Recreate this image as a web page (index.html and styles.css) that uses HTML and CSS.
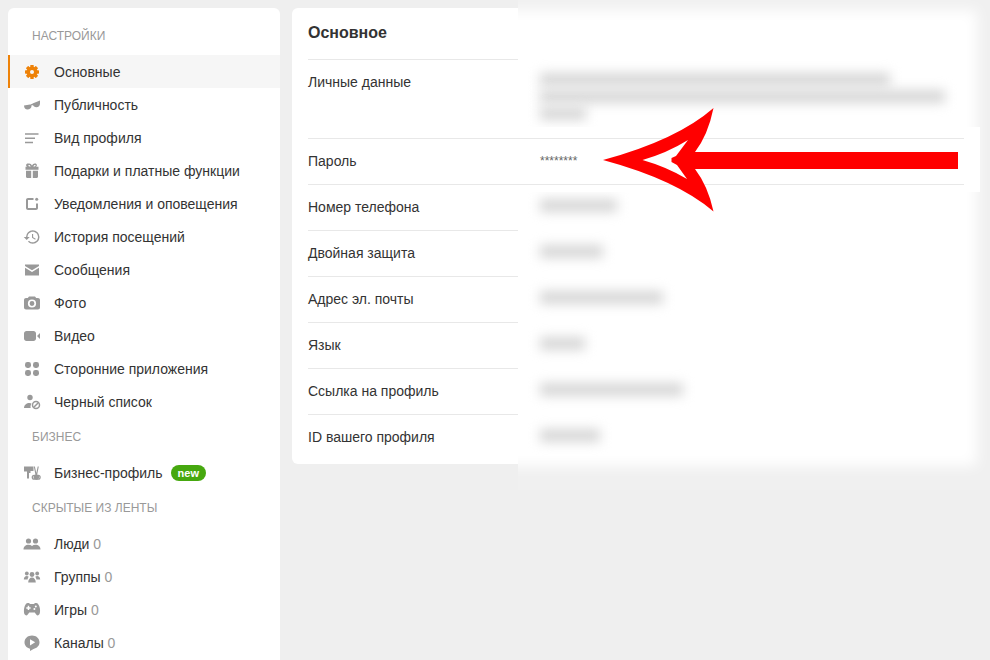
FILE: index.html
```html
<!DOCTYPE html>
<html lang="ru">
<head>
<meta charset="utf-8">
<title>Настройки</title>
<link rel="stylesheet" href="styles.css">
</head>
<body>
<div class="page">
  <nav class="side">
    <div class="side-head">Настройки</div>
    <a class="item active"><svg class="ico" viewBox="0 0 18 18"><g fill="#ee8208"><circle cx="9" cy="9" r="5.4"/><rect x="7.3" y="2" width="3.4" height="14" rx=".6"/><rect x="7.3" y="2" width="3.4" height="14" rx=".6" transform="rotate(45 9 9)"/><rect x="7.3" y="2" width="3.4" height="14" rx=".6" transform="rotate(90 9 9)"/><rect x="7.3" y="2" width="3.4" height="14" rx=".6" transform="rotate(135 9 9)"/></g><circle cx="9" cy="9" r="2" fill="#f6f6f6"/></svg><span>Основные</span></a>
    <a class="item"><svg class="ico" viewBox="0 0 18 18"><path d="M1 9.500 8.500 8.200V10c0 2-2 3.500-4 3.500S1 12 1 9.500zM9.500 7.600 17 4.500v3c0 2.300-1.500 3.700-3.500 3.700S9.500 10 9.500 7.600zM8 8.300l2-.8v1.400l-2 .5z"/></svg><span>Публичность</span></a>
    <a class="item"><svg class="ico" viewBox="0 0 18 18"><path d="M2 4.300h13.500v1.500H2zM2 8.500h10v1.500H2zM2 12.700h8v1.500H2z"/></svg><span>Вид профиля</span></a>
    <a class="item"><svg class="ico" viewBox="0 0 18 18"><path fill-rule="evenodd" d="M6.100 1.500c1.300 0 2.300.8 2.900 2 .6-1.200 1.600-2 2.900-2 1.200 0 2 .7 2 1.700 0 .8-.4 1.300-1 1.600H15.500v2.900h-13V4.800h1.600c-.6-.3-1-.8-1-1.600 0-1 .8-1.700 2-1.700zm0 1.400c-.5 0-.8.200-.8.500 0 .6.900 1 2.400 1.200-.3-1-.9-1.700-1.600-1.700zm5.800 0c-.7 0-1.300.7-1.600 1.700 1.500-.2 2.400-.6 2.400-1.200 0-.3-.3-.5-.8-.5zM3 8.700h5.200v7.200H4.200c-.7 0-1.200-.5-1.200-1.200zm6.800 0H15v6c0 .7-.5 1.200-1.200 1.200h-4z"/></svg><span>Подарки и платные функции</span></a>
    <a class="item"><svg class="ico" viewBox="0 0 18 18"><path d="M10.500 3H5C3.900 3 3 3.900 3 5v8c0 1.100.9 2 2 2h8c1.100 0 2-.9 2-2V8.500h-2V13H5V5h5.500z"/><circle cx="13.700" cy="4.300" r="1.500"/></svg><span>Уведомления и оповещения</span></a>
    <a class="item"><svg class="ico" viewBox="0 0 24 24"><path d="M13 3a9 9 0 0 0-9 9H1l3.890 3.890.07.14L9 12H6c0-3.870 3.130-7 7-7s7 3.130 7 7-3.130 7-7 7c-1.930 0-3.680-.79-4.940-2.060l-1.420 1.420A8.954 8.954 0 0 0 13 21a9 9 0 0 0 0-18zm-1 5v5l4.280 2.540.72-1.210-3.500-2.080V8H12z"/></svg><span>История посещений</span></a>
    <a class="item"><svg class="ico" viewBox="0 0 18 18"><path d="M2 3.500h14v1.400L9 9.200 2 4.900zM2 6.700l7 4.300 7-4.300v7.800H2z"/></svg><span>Сообщения</span></a>
    <a class="item"><svg class="ico" viewBox="0 0 18 18"><path fill-rule="evenodd" d="M6 2.500h6l1.200 1.500H15c1.100 0 2 .9 2 2v7.500c0 1.100-.9 2-2 2H3c-1.100 0-2-.9-2-2V6c0-1.100.9-2 2-2h1.800zM9 5.400a4.100 4.100 0 1 0 0 8.200 4.100 4.100 0 0 0 0-8.200zm0 1.700a2.400 2.400 0 1 1 0 4.800 2.400 2.400 0 0 1 0-4.800z"/></svg><span>Фото</span></a>
    <a class="item"><svg class="ico" viewBox="0 0 18 18"><path d="M3.500 4H10.500C11.900 4 13 5.100 13 6.500v5c0 1.400-1.100 2.500-2.500 2.500h-7C2.100 14 1 12.900 1 11.500v-5C1 5.100 2.100 4 3.500 4zM14 9l3-3v6z"/></svg><span>Видео</span></a>
    <a class="item"><svg class="ico" viewBox="0 0 18 18"><rect x="2" y="2" width="6" height="6" rx="2.400"/><rect x="10" y="2" width="6" height="6" rx="2.400"/><rect x="2" y="10" width="6" height="6" rx="2.400"/><rect x="10" y="10" width="6" height="6" rx="2.400"/></svg><span>Сторонние приложения</span></a>
    <a class="item"><svg class="ico" viewBox="0 0 18 18"><circle cx="7" cy="4.500" r="2.700"/><path d="M1 15c0-3 2.600-5 5.500-5 .8 0 1.500.2 2 .5-.6.900-1 1.900-1 3 0 .5.100 1 .2 1.500z"/><circle cx="13" cy="12" r="3.500" fill="none" stroke="#999" stroke-width="1.500"/><path d="M10.800 14.300l4.500-4.500" stroke="#999" stroke-width="1.500"/></svg><span>Черный список</span></a>
    <div class="side-head">Бизнес</div>
    <a class="item"><svg class="ico" viewBox="0 0 18 18"><path d="M1 2.500h9.500v4.500H7.500v2H6v5.500H4V7.500H1z"/><path d="M10.800 2.500h1.100l1.400 6.500 1.400-6.500h1.100L14.200 10.500a2.800 2.800 0 1 1-1.800 0z"/><circle cx="11.200" cy="13.200" r="1.900" fill="none" stroke="#999" stroke-width="1.300"/><circle cx="15.200" cy="13.200" r="1.900" fill="none" stroke="#999" stroke-width="1.300"/></svg><span>Бизнес-профиль</span><b class="badge">new</b></a>
    <div class="side-head">Скрытые из ленты</div>
    <a class="item"><svg class="ico" viewBox="0 0 18 18"><circle cx="5.500" cy="6" r="2.600"/><circle cx="12.500" cy="6" r="2.600"/><path d="M.5 14.500c0-3 2.200-4.800 5-4.800 1.400 0 2.600.4 3.500 1.200.9-.8 2.100-1.200 3.500-1.200 2.800 0 5 1.800 5 4.800z"/></svg><span>Люди <i class="count">0</i></span></a>
    <a class="item"><svg class="ico" viewBox="0 0 18 18"><circle cx="3.800" cy="5.500" r="1.900"/><circle cx="9" cy="6.500" r="2.400"/><circle cx="14.200" cy="5.500" r="1.900"/><path d="M.8 11.500c0-2 1.300-3.400 3-3.400.8 0 1.400.3 1.900.7-.6.700-1 1.600-1.100 2.700zM17.200 11.500c0-2-1.300-3.400-3-3.400-.8 0-1.400.3-1.900.7.600.7 1 1.600 1.100 2.700zM5.200 14.500c0-3 1.700-5 3.800-5s3.800 2 3.800 5z"/></svg><span>Группы <i class="count">0</i></span></a>
    <a class="item"><svg class="ico" viewBox="0 0 18 18"><path fill-rule="evenodd" d="M5 2c1 0 1.700.5 2.200 1h3.600c.5-.5 1.200-1 2.200-1 2 0 3.200 2 3.800 5 .5 2.800.4 6.500-1.500 7.300-1.300.5-2.500-1-3.500-2.800H6.200c-1 1.800-2.200 3.300-3.500 2.800C.8 13.500.7 9.800 1.200 7 1.800 4 3 2 5 2zM4.700 4.800v1.400H3.300v1.500h1.400v1.400h1.500V7.700h1.400V6.200H6.200V4.800zM12.800 4.500a1 1 0 1 0 0 2 1 1 0 0 0 0-2zm-1.400 2.400a1 1 0 1 0 0 2 1 1 0 0 0 0-2z"/></svg><span>Игры <i class="count">0</i></span></a>
    <a class="item"><svg class="ico" viewBox="0 0 18 18"><path fill-rule="evenodd" d="M9 1.500c4.200 0 7.500 2.900 7.500 6.800 0 3.400-2.600 6-6 6.600L7 17v-2.300C3.800 14 1.500 11.500 1.500 8.300 1.500 4.400 4.800 1.500 9 1.500zM7 5.200v6.200l5.200-3.100z"/></svg><span>Каналы <i class="count">0</i></span></a>
  </nav>

  <main class="card">
    <h2 class="card-title">Основное</h2>
    <div class="row tall">Личные данные</div>
    <div class="row">Пароль</div>
    <div class="row">Номер телефона</div>
    <div class="row">Двойная защита</div>
    <div class="row">Адрес эл. почты</div>
    <div class="row">Язык</div>
    <div class="row">Ссылка на профиль</div>
    <div class="row">ID вашего профиля</div>
  </main>

  <div class="mask">
    <div class="mask-sheet"></div>
    <div class="mask-col">
      <div class="val tall">
        <div class="smear smear-a"></div>
        <div class="smear smear-b"></div>
        <div class="smear smear-c"></div>
      </div>
      <div class="val pass">
        <div class="pass-strip"><div class="pass-line">********</div></div>
      </div>
      <div class="val"><div class="smear w77"></div></div>
      <div class="val"><div class="smear w63"></div></div>
      <div class="val"><div class="smear w123"></div></div>
      <div class="val"><div class="smear w45"></div></div>
      <div class="val"><div class="smear w143"></div></div>
      <div class="val"><div class="smear w60"></div></div>
    </div>
  </div>

  <svg class="arrow" viewBox="0 0 990 660" width="990" height="660"><path fill="#ff0000" fill-rule="evenodd" d="M603 160 Q677 140 713.500 108 Q708 135 695 152 H958 V169 H695 Q708 186 713.500 211.500 Q677 180 603 160 Z M642.500 160 Q667 167 687 179 L677 165 L671.500 162 V158 L676 156 L688 140 Q667 153 642.500 160 Z"/></svg>
</div>
</body>
</html>
```

FILE: styles.css
```css
html, body {
  margin: 0;
  height: 660px;
  overflow: hidden;
  background: #efefef;
}

body {
  font-family: "Liberation Sans", Arial, sans-serif;
  font-size: 14px;
  color: #333;
}

.page {
  position: relative;
  display: flex;
  align-items: flex-start;
  gap: 12px;
  box-sizing: border-box;
  padding: 8px 8px 0;
  height: 660px;
}

.side {
  flex: none;
  width: 272px;
  height: 652px;
  padding-top: 9px;
  box-sizing: border-box;
  background: #fff;
  border-radius: 6px 6px 0 0;
}

.side-head {
  height: 38px;
  line-height: 38px;
  padding-left: 24px;
  font-size: 12px;
  color: #999;
  text-transform: uppercase;
}

.item {
  display: flex;
  align-items: center;
  height: 33px;
  padding-left: 13px;
  border-left: 2px solid transparent;
  color: #333;
}

.item.active {
  background: #f6f6f6;
  border-left-color: #ee8208;
}

.ico {
  flex: none;
  width: 18px;
  height: 18px;
  margin-right: 13px;
  fill: #999;
}

.badge {
  margin-left: 8px;
  padding: 0 7px;
  height: 16px;
  line-height: 16px;
  font-size: 11px;
  color: #fff;
  background: #46a80f;
  border-radius: 8px;
}

.count {
  font-style: normal;
  color: #999;
}

.card {
  flex: none;
  box-sizing: border-box;
  width: 688px;
  padding: 0 16px 4px;
  background: #fff;
  border-radius: 6px;
}

.card-title {
  margin: 0;
  height: 51px;
  line-height: 50px;
  font-size: 16px;
  font-weight: 700;
}

.row {
  box-sizing: border-box;
  height: 46px;
  padding-top: 13px;
  line-height: 18px;
  border-top: 1px solid #e8e8e8;
}

.row.tall {
  height: 79px;
}

.mask {
  position: absolute;
  left: 518px;
  top: 0;
  width: 472px;
  height: 490px;
  overflow: hidden;
  background: #f0f0f0;
  isolation: isolate;
}

.mask-sheet {
  position: absolute;
  left: -40px;
  top: 10px;
  width: 499px;
  height: 456px;
  background: #fff;
  filter: blur(7px);
}

.mask-col {
  position: relative;
  padding: 59px 0 0 22px;
}

.val {
  position: relative;
  height: 46px;
  padding-top: 15px;
  box-sizing: border-box;
}

.val.tall {
  height: 79px;
  padding-top: 14px;
}

.smear {
  height: 13px;
  background: #d6d6d6;
  filter: blur(6px);
}

.smear-a { width: 350px; margin-bottom: 4px; }
.smear-b { width: 405px; margin-bottom: 4px; }
.smear-c { width: 46px; }
.w77 { width: 77px; }
.w63 { width: 63px; }
.w123 { width: 123px; }
.w45 { width: 45px; }
.w143 { width: 143px; }
.w60 { width: 60px; }

.pass-strip {
  position: absolute;
  z-index: 1;
  left: -22px;
  width: 462px;
  top: -11px;
  height: 65px;
  padding-top: 11px;
  box-sizing: border-box;
  background: #fff;
}

.pass-line {
  box-sizing: border-box;
  width: 446px;
  height: 47px;
  padding: 13px 0 0 22px;
  font-size: 12px;
  line-height: 18px;
  color: #666;
  border-top: 1px solid #e8e8e8;
  border-bottom: 1px solid #e8e8e8;
}

.arrow {
  position: absolute;
  left: 0;
  top: 0;
  pointer-events: none;
}
```
